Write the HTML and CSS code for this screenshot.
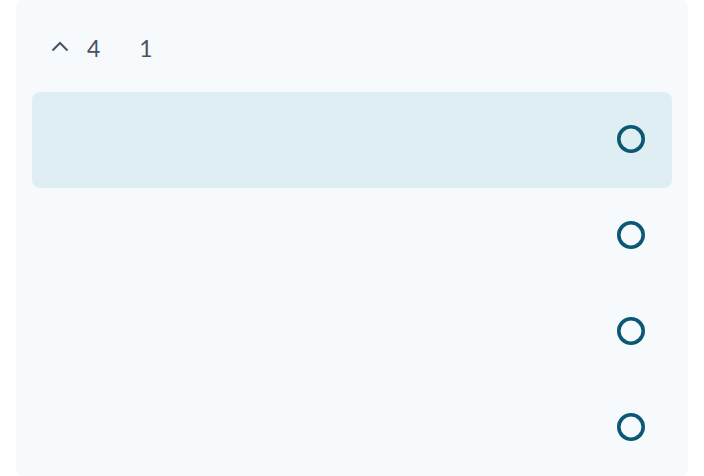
FILE: index.html
```html
<!DOCTYPE html>
<html>
<head>
<meta charset="utf-8">
<link rel="stylesheet" href="styles.css">
</head>
<body>
<div class="card">
  <div class="header">
    <svg class="caret" width="18" height="11" viewBox="0 0 18 11"><path d="M1.5 9.5 L9 2 L16.5 9.5" fill="none" stroke="#4b5160" stroke-width="2"/></svg>
    <span class="num first">4</span>
    <span class="num second">1</span>
  </div>
  <div class="list">
    <div class="row active"><svg class="radio" width="30" height="30" viewBox="0 0 30 30"><circle cx="15" cy="15" r="12.2" fill="none" stroke="#0b5872" stroke-width="3.6"/></svg></div>
    <div class="row"><svg class="radio" width="30" height="30" viewBox="0 0 30 30"><circle cx="15" cy="15" r="12.2" fill="none" stroke="#0b5872" stroke-width="3.6"/></svg></div>
    <div class="row"><svg class="radio" width="30" height="30" viewBox="0 0 30 30"><circle cx="15" cy="15" r="12.2" fill="none" stroke="#0b5872" stroke-width="3.6"/></svg></div>
    <div class="row"><svg class="radio" width="30" height="30" viewBox="0 0 30 30"><circle cx="15" cy="15" r="12.2" fill="none" stroke="#0b5872" stroke-width="3.6"/></svg></div>
  </div>
</div>
</body>
</html>
```

FILE: styles.css
```css
html, body {
  margin: 0;
  padding: 0;
  background: #ffffff;
}
body {
  font-family: Lato, "Liberation Sans", sans-serif;
  padding: 0 16px;
}
.card {
  background: #f6fafc;
  border-radius: 8px;
  height: 476px;
  padding: 16px 16px 0;
  box-sizing: border-box;
}
.header {
  height: 64px;
  display: flex;
  align-items: center;
  padding-left: 19px;
  margin-bottom: 12px;
  color: #4b5160;
  font-size: 23px;
}
.caret {
  display: block;
  margin-top: -4px;
}
.num.first {
  margin-left: 18px;
}
.num.second {
  margin-left: 39px;
}
.row {
  height: 96px;
  display: flex;
  align-items: center;
  justify-content: flex-end;
  padding-right: 26px;
  border-radius: 8px;
}
.row.active {
  background: #dfeef3;
}
.radio {
  display: block;
  margin-top: -2px;
}
```
